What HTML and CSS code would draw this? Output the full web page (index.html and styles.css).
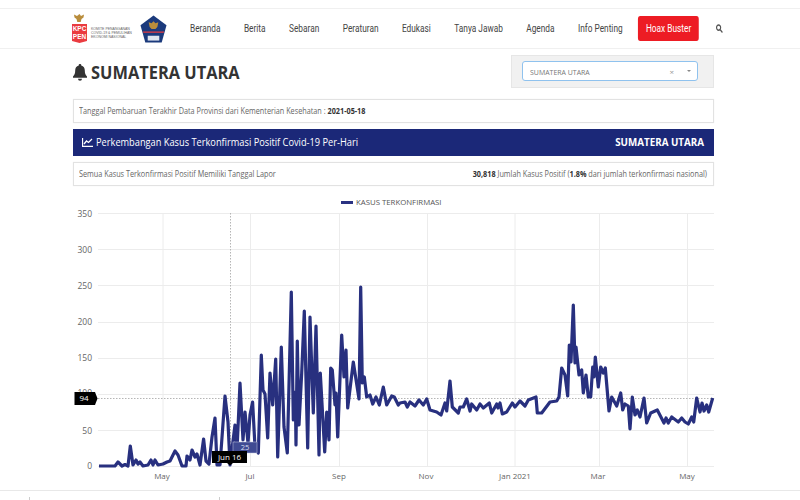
FILE: index.html
```html
<!DOCTYPE html>
<html lang="id">
<head>
<meta charset="utf-8">
<title>Sumatera Utara</title>
<link rel="stylesheet" href="styles.css">
</head>
<body>
<header class="site-header">
  <div class="brand">
    <div class="kpc">
      <svg class="kpc-mark" width="15" height="29" viewBox="0 0 15 29">
        <path class="gold" d="M7.500 0l1.500 2 3-1.500-.5 3-2 1.500-.8 3h-3.400l-.8-3-2-1.500-.5-3 3 1.500z"/>
        <path class="red" d="M0 10h15v17l-7.500 2-7.500-2z"/>
        <text class="kpc-text" x="7.500" y="17" text-anchor="middle">KPC</text>
        <text class="kpc-text" x="7.500" y="24.500" text-anchor="middle">PEN</text>
      </svg>
      <div class="kpc-name">KOMITE PENANGANAN<br>COVID-19 &amp; PEMULIHAN<br>EKONOMI NASIONAL</div>
    </div>
    <svg class="shield" width="27" height="28" viewBox="0 0 28 28">
      <path class="navy" d="M14 0l13.500 10-5 18h-17l-5-18z"/>
      <path class="gold" d="M14 6l2 2 3-1-1 5-2 2h-4l-2-2-1-5 3 1z"/>
      <path class="red" d="M3 16.500h22l-.5 1.500h-21z"/>
      <rect class="light" x="8" y="21" width="12" height="5"/>
    </svg>
  </div>
  <nav class="nav">
    <a>Beranda</a><a>Berita</a><a>Sebaran</a><a>Peraturan</a><a>Edukasi</a><a>Tanya Jawab</a><a>Agenda</a><a>Info Penting</a>
    <a class="hoax">Hoax Buster</a>
    <svg class="search" width="10" height="9" viewBox="0 0 8 8"><circle cx="3.200" cy="3.200" r="2.300"/><path d="M5 5l2.500 2.500"/></svg>
  </nav>
</header>
<main class="page">
  <div class="title-row">
    <h1 class="title">
      <svg class="bell" width="14" height="17" viewBox="0 0 14 17"><path d="M7 0a1.200 1.200 0 0 1 1.200 1.500c2.500.5 3.600 2.600 3.600 5 0 3 .7 4.300 2.200 6v1.200H0v-1.200c1.500-1.700 2.200-3 2.200-6 0-2.400 1.100-4.500 3.600-5A1.200 1.200 0 0 1 7 0z"/><path d="M5 14.800h4a2 2 0 0 1-4 0z"/></svg>
      <span class="title-text">SUMATERA UTARA</span>
    </h1>
    <div class="select-panel">
      <div class="select">
        <span class="select-value"><span class="select-text">SUMATERA UTARA</span></span>
        <span class="select-clear">×</span>
        <span class="select-caret"></span>
      </div>
    </div>
  </div>
  <div class="card update"><span class="tight-l">Tanggal Pembaruan Terakhir Data Provinsi dari Kementerian Kesehatan : <b>2021-05-18</b></span></div>
  <div class="band">
    <span class="band-title">
      <svg class="chart-icon" width="11" height="9" viewBox="0 0 11 9"><path d="M.5 0v8.500H11"/><path d="M2 6l2.500-3 2 1.500L10 1"/></svg>
      <span class="band-text">Perkembangan Kasus Terkonfirmasi Positif Covid-19 Per-Hari</span>
    </span>
    <b class="band-region">SUMATERA UTARA</b>
  </div>
  <div class="card stats">
    <span class="tight-l">Semua Kasus Terkonfirmasi Positif Memiliki Tanggal Lapor</span>
    <span class="tight-r"><b>30,818</b> Jumlah Kasus Positif (<b>1.8%</b> dari jumlah terkonfirmasi nasional)</span>
  </div>
</main>
<svg class="chart" width="800" height="298" viewBox="0 192 800 298">
  <g class="grid">
    <path d="M98 213.500H714M98 249.500H714M98 285.500H714M98 322.500H714M98 358.500H714M98 394.500H714M98 430.500H714M98 466.500H714"/>
    <path d="M163 213V466M250.500 213V466M339.500 213V466M427.500 213V466M515 213V466M599.500 213V466M687.500 213V466"/>
  </g>
  <path class="crosshair" d="M230.500 213V466M98 398.500H714"/>
  <path class="legend-key" d="M341 202.500H353"/>
  <text class="legend" x="356" y="204.500">KASUS TERKONFIRMASI</text>
  <g class="y-axis">
    <text x="92" y="216.500">350</text><text x="92" y="252.500">300</text><text x="92" y="288.500">250</text><text x="92" y="325">200</text><text x="92" y="361">150</text><text x="92" y="396">100</text><text x="92" y="433.500">50</text><text x="92" y="469">0</text>
  </g>
  <g class="x-axis">
    <text x="162" y="478.500">May</text><text x="250" y="478.500">Jul</text><text x="339" y="478.500">Sep</text><text x="426" y="478.500">Nov</text><text x="515" y="478.500">Jan 2021</text><text x="598" y="478.500">Mar</text><text x="687" y="478.500">May</text>
  </g>
  <path class="series" d="M99 466L115 466 118 462 122 466 125 464.500 128 466 130.300 446 133 465 136 460 138 464 140 462 143 466 148 465 151 460 153 465 155 460 158 465 163 464 167 462 170 461 175 451 178 455 182 466 186 466 187 456 190 460 192 450 195 457 197 454 200 465 203.600 439 206 461 209 464 212 437 215 418 217 465 220 465 225 396 228 422 230 465 235 425 237 450 240 383 243 440 245 412 248 443 250 415 252.600 402 255 447 258.300 453 261.300 355 263 390 265 394 267.700 438 270 373 272.700 405 275.700 359 277.700 457 281.300 347 284 427 287.300 453 291.300 292 293.300 420 295.300 392 296 445 297.300 341 299 425 301.700 373 304.300 311 307.700 448 310 317 313.300 413 316 326 319 455 320.300 373 324.700 452 326.700 412 329 440 330.700 368 332.300 370 335 405 336 393 337.700 437 341.700 335 344 377 346 350 347.700 408 353.300 362 359 399 360.700 287 362.300 383 364.300 377 366.700 397 370 395 372.700 404 376 397 379.300 405 383.300 387 386.700 405 391.700 396 394.300 397 398.300 405 400 403 405 402 407.300 407 410 402 415 406 419 400 423.300 405 426.700 399 430 410 436.700 412 441 415 445 403 446.700 411 450 381 452.300 407 458.300 413 460 407 463.300 407 466.700 399 470 411 471.700 404 476.700 410 480 404 483.300 408 489.300 403 491.700 413 496.700 404 498 408 500 403 502.300 414 506.700 412 512.300 403 515 407 520 401 525 406 528.300 400 536 397 537.300 413 541.700 413 550 402 556.700 401 559 397 561.700 368 565 375 567.700 396 569.300 345 571 362 573.300 305 575 363 576 347 579 375 581.700 370 583.300 393 586 375 588.300 397 590.700 397 592.700 367 594 377 595.300 357 598.300 387 600.700 367 603.300 373 605.300 368 609 411 611.700 397 616.700 406 620.700 393 622.700 410 625 404 628.300 406 630 429 632.300 397 635 415 637.300 410 640 417 644 398 646.700 423 650.700 413 657.300 410 664 423 666 418 668.300 423 671.700 417 678.300 422 681.700 418 685 422 688.300 424 691.700 417 693.700 422 696.700 398 700 412 702 403 704 411 706.700 405 708.700 412 712.700 398"/>
  <g class="marker">
    <rect class="pin-soft" x="233" y="442" width="24" height="11"/>
    <text class="pin-soft-text" x="245" y="450">25</text>
    <path class="pin" d="M212 451h35v12h-14l-3 2.500-3-2.500h-15z"/>
    <text class="pin-text" x="229.500" y="460">Jun 16</text>
    <path class="pin" d="M74.500 392h20.500l2.500 6.500-2.500 6.500h-20.500z"/>
    <text class="pin-text" x="84" y="401">94</text>
  </g>
</svg>
<footer class="footer">
  <div class="foot-col foot-a"></div>
  <div class="foot-col foot-b"></div>
</footer>
</body>
</html>
```
FILE: styles.css
```css
html, body { margin: 0; padding: 0; }
body { width: 800px; height: 500px; overflow: hidden; background: #fff; font-family: "Open Sans", sans-serif; color: #555; }
.site-header { margin-top: 8px; height: 39px; display: flex; align-items: center; padding-left: 72px; border-top: 1px solid #f0f0f0; border-bottom: 1px solid #f0f0f0; }
.brand { display: flex; align-items: center; gap: 4px; width: 106px; flex: none; }
.kpc { display: flex; align-items: center; gap: 4px; }
.kpc-name { font-family: "Liberation Sans", sans-serif; font-size: 3.500px; line-height: 4px; color: #666; white-space: nowrap; width: 45px; padding-top: 9px; }
.kpc-text { font-family: "Liberation Sans", sans-serif; font-size: 6.500px; font-weight: 700; fill: #fff; }
.gold { fill: #b98d3c; }
.red { fill: #ea3b40; }
.navy { fill: #1b3a7c; }
.light { fill: #dfe5ef; }
.shield { flex: none; }
.nav { display: flex; align-items: center; margin-left: 12px; font-family: Roboto, sans-serif; font-size: 10.500px; color: #444; white-space: nowrap; transform: scaleX(.79); transform-origin: left center; }
.nav a { margin-right: 29.700px; }
.nav a.hoax { margin-left: -10px; margin-right: 21px; width: 77px; height: 25px; display: flex; align-items: center; justify-content: center; background: #ed1c24; color: #fff; border-radius: 3px; }
.search { fill: none; stroke: #555; stroke-width: 1.300; }
.page { margin-left: 73px; width: 641px; }
.title-row { display: flex; justify-content: space-between; height: 50px; padding-top: 6px; box-sizing: border-box; }
.title { margin: 0; display: flex; align-items: center; gap: 4px; height: 34px; font-size: 17.500px; font-weight: 700; color: #333; }
.title-text { display: inline-block; transform: scaleX(.937); transform-origin: left center; }
.bell { fill: #333; }
.select-panel { width: 203px; height: 33px; background: #f1f1f1; border: 1px solid #e6e6e6; box-sizing: border-box; padding: 5px 15px 0 10px; }
.select { box-sizing: border-box; height: 20px; background: #fff; border: 1px solid #8fc2ee; border-radius: 3px; display: flex; align-items: center; padding: 0 6px 0 7px; font-size: 8px; color: #777; }
.select-value { flex: 1; }
.select-text { display: inline-block; transform: scaleX(.87); transform-origin: left center; }
.select-clear { font-size: 8px; color: #999; margin-right: 13px; }
.select-caret { width: 0; height: 0; border: 2.500px solid transparent; border-top-color: #888; border-bottom: 0; }
.card { box-sizing: border-box; border: 1px solid #e2e2e2; font-size: 8.500px; color: #666; display: flex; align-items: center; padding: 0 0 1px 5px; box-shadow: 0 0 1px #eee; }
.card b { color: #333; }
.tight-l { display: inline-block; white-space: nowrap; transform: scaleX(.855); transform-origin: left center; }
.tight-r { display: inline-block; white-space: nowrap; transform: scaleX(.855); transform-origin: right center; }
.update { height: 24px; }
.band { box-sizing: border-box; height: 27px; margin-top: 6px; background: #1b2878; color: #fff; display: flex; align-items: center; justify-content: space-between; padding: 0 10px 1px 9px; font-size: 10.500px; }
.band-title { display: flex; align-items: center; gap: 3px; }
.band-text { display: inline-block; white-space: nowrap; transform: scaleX(.88); transform-origin: left center; }
.chart-icon { fill: none; stroke: #fff; stroke-width: 1.300; }
.band-region { font-size: 9.800px; }
.stats { height: 24px; margin-top: 6px; justify-content: space-between; padding-right: 6px; }
.chart { display: block; margin-top: 6px; }
.grid path { fill: none; stroke: #ececec; stroke-width: 1; }
.crosshair { fill: none; stroke: #b5b5b5; stroke-width: 1; stroke-dasharray: 1.500 1.500; }
.legend-key { stroke: #2a3282; stroke-width: 3; }
.legend { font-size: 7.800px; fill: #555; }
.y-axis text { font-size: 8.500px; fill: #666; text-anchor: end; }
.x-axis text { font-size: 8px; fill: #666; text-anchor: middle; }
.series { fill: none; stroke: #28307f; stroke-width: 3.200; stroke-linejoin: round; }
.pin { fill: #000; }
.pin-text { font-size: 8px; fill: #fff; text-anchor: middle; }
.pin-soft { fill: #3f4a92; stroke: #c5c9e2; stroke-width: .5; }
.pin-soft-text { font-size: 7.500px; fill: #d8dbee; text-anchor: middle; }
.footer { display: flex; height: 10px; border-top: 1px solid #e8e8e8; box-sizing: border-box; padding: 6px 0 0 29px; gap: 189px; }
.foot-col { width: 1px; height: 4px; background: #ccc; }
```
